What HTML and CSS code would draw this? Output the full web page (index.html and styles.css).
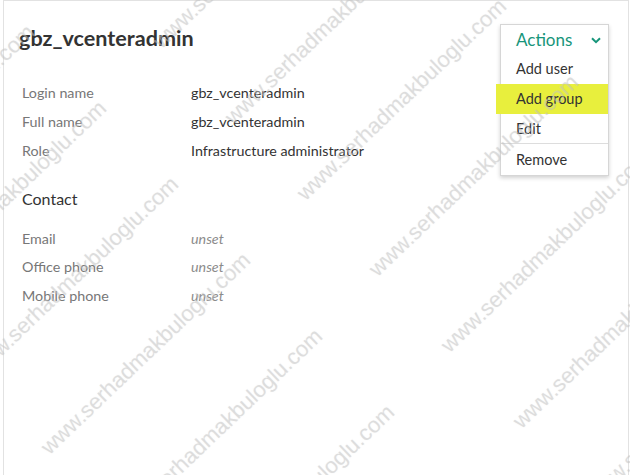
FILE: index.html
```html
<!DOCTYPE html>
<html lang="en">
<head>
  <meta charset="UTF-8">
  <meta name="viewport" content="width=device-width, initial-scale=1">
  <title>gbz_vcenteradmin</title>
  <link rel="stylesheet" href="styles.css">
</head>
<body>
  <div class="panel">
    <h1 class="title">gbz_vcenteradmin</h1>

    <div class="fields">
      <div class="label">Login name</div>
      <div class="value">gbz_vcenteradmin</div>
      <div class="label">Full name</div>
      <div class="value">gbz_vcenteradmin</div>
      <div class="label">Role</div>
      <div class="value">Infrastructure administrator</div>
    </div>

    <h2 class="section-title">Contact</h2>

    <div class="fields contact">
      <div class="label">Email</div>
      <div class="value unset">unset</div>
      <div class="label">Office phone</div>
      <div class="value unset">unset</div>
      <div class="label">Mobile phone</div>
      <div class="value unset">unset</div>
    </div>

    <!-- open actions menu -->
    <div class="menu">
      <div class="menu-head">
        <span>Actions</span>
        <svg class="chevron" width="10" height="7" viewBox="0 0 10 7">
          <path d="M1 1.2 L5 5.2 L9 1.2" fill="none" stroke="#17957a" stroke-width="2"/>
        </svg>
      </div>
      <div class="menu-item">Add user</div>
      <div class="menu-item marked">Add group</div>
      <div class="menu-item short">Edit</div>
      <div class="menu-sep"></div>
      <div class="menu-item last">Remove</div>
    </div>
  </div>

  <div class="watermarks">
    <span style="left:163px;top:31px">www.serhadmakbuloglu.com</span>
    <span style="left:235px;top:107px">www.serhadmakbuloglu.com</span>
    <span style="left:307px;top:183px">www.serhadmakbuloglu.com</span>
    <span style="left:379px;top:259px">www.serhadmakbuloglu.com</span>
    <span style="left:451px;top:335px">www.serhadmakbuloglu.com</span>
    <span style="left:523px;top:411px">www.serhadmakbuloglu.com</span>
    <span style="left:595px;top:487px">www.serhadmakbuloglu.com</span>
    <span style="left:-165px;top:209px">www.serhadmakbuloglu.com</span>
    <span style="left:-93px;top:285px">www.serhadmakbuloglu.com</span>
    <span style="left:-21px;top:361px">www.serhadmakbuloglu.com</span>
    <span style="left:51px;top:437px">www.serhadmakbuloglu.com</span>
    <span style="left:123px;top:513px">www.serhadmakbuloglu.com</span>
    <span style="left:195px;top:589px">www.serhadmakbuloglu.com</span>
  </div>
</body>
</html>
```

FILE: styles.css
```css
* {
  margin: 0;
  padding: 0;
  box-sizing: border-box;
}
body {
  font-family: 'Lato', 'Liberation Sans', sans-serif;
  background: #ffffff;
  color: #333333;
  width: 630px;
  height: 475px;
  position: relative;
  overflow: hidden;
}
.panel {
  position: relative;
  margin-left: 3px;
  width: 626px;
  height: 475px;
  border: 1px solid #e2e2e2;
  border-bottom: none;
  padding: 25px 0 0 15px;
}
.title {
  font-size: 21.6px;
  font-weight: 700;
  line-height: 24px;
  color: #333333;
}
.fields {
  display: grid;
  grid-template-columns: 169px 1fr;
  grid-auto-rows: 29px;
  align-items: center;
  margin-top: 28px;
  padding-left: 3px;
  font-size: 14.3px;
}
.fields.contact {
  grid-auto-rows: 28.5px;
  margin-top: 14px;
}
.label {
  color: #777777;
}
.value {
  color: #333333;
}
.value.unset {
  font-style: italic;
  color: #8c8c8c;
}
.section-title {
  margin-top: 23px;
  padding-left: 3px;
  font-size: 16px;
  font-weight: 400;
  line-height: 22px;
  color: #333333;
}
.menu {
  position: absolute;
  left: 496px;
  top: 23px;
  width: 109px;
  height: 152px;
  background: #ffffff;
  border: 1px solid #d6d6d6;
  box-shadow: 0 2px 4px rgba(0, 0, 0, 0.18);
}
.menu-head {
  display: flex;
  align-items: center;
  justify-content: space-between;
  height: 29px;
  padding: 0 7px 0 15px;
  font-size: 17px;
  color: #17957a;
}
.chevron {
  margin-top: 1px;
}
.menu-item {
  position: relative;
  height: 30px;
  line-height: 30px;
  padding-left: 15px;
  font-size: 14.5px;
  color: #333333;
}
.menu-item.short {
  height: 29px;
  line-height: 29px;
}
.menu-item.last {
  height: 31px;
  line-height: 31px;
}
.menu-item.marked {
  background: #e8ef3d;
  margin-left: -5px;
  padding-left: 20px;
}
.menu-sep {
  height: 1px;
  background: #dddddd;
}
.watermarks {
  position: absolute;
  top: 0;
  left: 0;
  width: 630px;
  height: 475px;
  overflow: hidden;
  pointer-events: none;
}
.watermarks span {
  position: absolute;
  font-family: 'Liberation Sans', Arial, sans-serif;
  font-size: 22px;
  line-height: 22px;
  white-space: nowrap;
  color: rgba(200, 200, 200, 0.42);
  text-shadow: 0 0 1px rgba(170, 170, 170, 0.25);
  transform-origin: 0 20px;
  transform: rotate(-43.8deg);
}
```
